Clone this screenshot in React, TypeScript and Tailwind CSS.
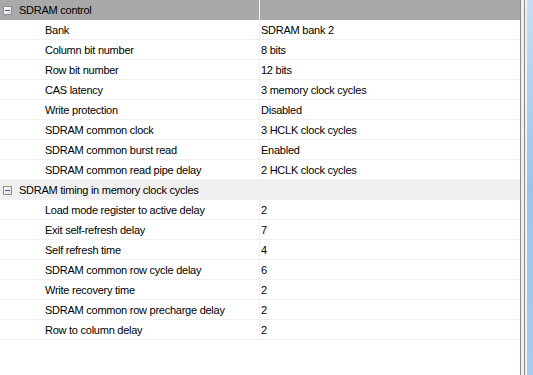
import React from "react";

type Row = [string, string];

const groups: { title: string; selected: boolean; rows: Row[] }[] = [
  {
    title: "SDRAM control",
    selected: true,
    rows: [
      ["Bank", "SDRAM bank 2"],
      ["Column bit number", "8 bits"],
      ["Row bit number", "12 bits"],
      ["CAS latency", "3 memory clock cycles"],
      ["Write protection", "Disabled"],
      ["SDRAM common clock", "3 HCLK clock cycles"],
      ["SDRAM common burst read", "Enabled"],
      ["SDRAM common read pipe delay", "2 HCLK clock cycles"],
    ],
  },
  {
    title: "SDRAM timing in memory clock cycles",
    selected: false,
    rows: [
      ["Load mode register to active delay", "2"],
      ["Exit self-refresh delay", "7"],
      ["Self refresh time", "4"],
      ["SDRAM common row cycle delay", "6"],
      ["Write recovery time", "2"],
      ["SDRAM common row precharge delay", "2"],
      ["Row to column delay", "2"],
    ],
  },
];

function Minus() {
  return (
    <div className="ml-[3px] mr-[7px] flex h-[9px] w-[9px] items-center justify-center border border-[#919191] bg-gradient-to-br from-white to-[#dcdcdc]">
      <div className="h-px w-[5px] bg-[#3a5fa8]" />
    </div>
  );
}

export default function App() {
  return (
    <div
      className="flex h-[375px] w-[533px] overflow-hidden bg-white text-[11px] leading-[14px] tracking-[-0.25px] text-black"
      style={{ fontFamily: '"Liberation Sans", Arial, sans-serif' }}
    >
      <div className="flex w-[520px] flex-col">
        {groups.map((g) => (
          <div key={g.title} className="flex flex-col">
            <div
              className={
                "flex h-[20px] items-center " +
                (g.selected ? "bg-[#a9a9a9]" : "bg-[#f0f0f0]")
              }
            >
              <div className="flex h-full w-[259px] items-center">
                <Minus />
                <span className="whitespace-nowrap">{g.title}</span>
              </div>
              {g.selected && <div className="h-full w-px bg-[#f4f4f4]" />}
            </div>
            {g.rows.map(([k, v]) => (
              <div key={k} className="flex h-[20px] border-b border-[#f0f0f0]">
                <div className="flex w-[259px] items-center pl-[45px] pt-[1px] whitespace-nowrap">
                  {k}
                </div>
                <div className="w-px bg-[#f0f0f0]" />
                <div className="flex flex-1 items-center pl-[1px] pt-[1px] whitespace-nowrap">
                  {v}
                </div>
              </div>
            ))}
          </div>
        ))}
      </div>
      <div className="flex h-full flex-1">
        <div className="w-px bg-[#8a8a8e]" />
        <div className="w-[3px] bg-[#f0f0f0]" />
        <div className="w-px bg-[#8a8a8e]" />
        <div className="w-[2px] bg-[#eef3f8]" />
        <div className="flex-1 bg-gradient-to-b from-[#c8def2] via-[#9cc4ea] to-[#a7cbed]" />
      </div>
    </div>
  );
}
